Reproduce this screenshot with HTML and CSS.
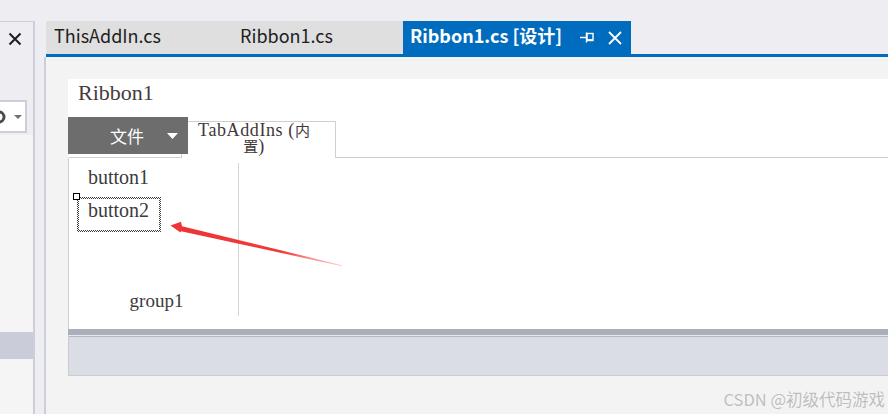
FILE: index.html
```html
<!DOCTYPE html>
<html lang="zh-CN">
<head>
<meta charset="utf-8">
<title>Ribbon1.cs [设计]</title>
<link rel="stylesheet" href="styles.css">
</head>
<body>
<div class="app">
  <aside class="side">
    <div class="side-head">
      <svg class="side-x" width="14" height="14" viewBox="0 0 14 14"><path d="M1.5 1.5 L12.5 12.5 M12.5 1.5 L1.5 12.5" stroke="#1e1e1e" stroke-width="2"/></svg>
    </div>
    <div class="side-search">
      <svg class="search-ring" width="10" height="16" viewBox="0 0 10 16"><circle cx="1" cy="8" r="5" fill="none" stroke="#4a4a4a" stroke-width="3"/></svg>
      <svg class="search-caret" width="8" height="4" viewBox="0 0 8 4"><path d="M0 0 H8 L4 4 Z" fill="#717171"/></svg>
    </div>
    <div class="side-list">
      <div class="side-sel"></div>
    </div>
  </aside>
  <main class="doc">
    <div class="tabs">
      <div class="tab tab-1">ThisAddIn.cs</div>
      <div class="tab tab-2">Ribbon1.cs</div>
      <div class="tab tab-active">
        <span class="tab-title">Ribbon1.cs [设计]</span>
        <svg class="pin" width="14" height="11" viewBox="0 0 14 11"><path d="M0 5.5 H6" stroke="#fff" stroke-width="1.4"/><path d="M6.5 0.5 V10.5" stroke="#fff" stroke-width="1.4"/><rect x="7" y="1.5" width="6" height="7" fill="none" stroke="#fff" stroke-width="1.4"/><path d="M7 7.8 H13" stroke="#fff" stroke-width="1.4"/></svg>
        <svg class="tab-x" width="14" height="14" viewBox="0 0 14 14"><path d="M1 1 L13 13 M13 1 L1 13" stroke="#fff" stroke-width="1.8"/></svg>
      </div>
    </div>
    <div class="tabline"></div>
    <div class="doc-body">
      <div class="designer">
        <div class="rb-title">Ribbon1</div>
        <div class="rb-tabs">
          <div class="file-btn">
            <span class="file-label">文件</span>
            <svg class="file-caret" width="11" height="6" viewBox="0 0 11 6"><path d="M0 0 H11 L5.5 6 Z" fill="#fff"/></svg>
          </div>
          <div class="rb-tab">TabAddIns (<span class="cjk">内置</span>)</div>
          <div class="rb-tabfill"></div>
        </div>
        <div class="rb-body">
          <div class="group">
            <div class="rb-btn btn-1">button1</div>
            <div class="rb-btn-sel">
              <span class="handle"></span>
              <div class="rb-btn-inner">button2</div>
            </div>
            <div class="group-label">group1</div>
          </div>
        </div>
        <div class="rb-bar"></div>
        <div class="rb-status"></div>
      </div>
    </div>
  </main>
</div>
<svg class="arrow" width="888" height="414" viewBox="0 0 888 414">
  <defs>
    <linearGradient id="ag" gradientUnits="userSpaceOnUse" x1="170" y1="226" x2="342" y2="266">
      <stop offset="0" stop-color="#ee3434"/>
      <stop offset="0.65" stop-color="#f03a3a"/>
      <stop offset="1" stop-color="#f77" stop-opacity="0.35"/>
    </linearGradient>
  </defs>
  <polygon points="170.5,225.5 181,221.8 182,226.2 342,265.2 342,266.2 181,231.2 180.5,232.6" fill="url(#ag)"/>
</svg>
<div class="watermark">CSDN @初级代码游戏</div>
</body>
</html>
```
FILE: styles.css
```css
html, body {
  margin: 0;
  padding: 0;
}
body {
  width: 888px;
  height: 414px;
  overflow: hidden;
  background: #eeeef2;
  position: relative;
  font-family: "Noto Sans CJK SC", "Noto Sans", sans-serif;
}
.app {
  display: flex;
  height: 414px;
  padding-top: 21px;
  box-sizing: border-box;
}

/* left tool panel */
.side {
  width: 33px;
  flex: none;
  border-top: 1px solid #cccedb;
  border-right: 2px solid #cccedb;
  display: flex;
  flex-direction: column;
  overflow: hidden;
}
.side-head {
  height: 78px;
}
.side-x {
  display: block;
  margin: 10px 0 0 8px;
}
.side-search {
  height: 29px;
  width: 27px;
  margin-left: -2px;
  border: 2px solid #cccedb;
  border-left: none;
  background: #fff;
  display: flex;
  align-items: center;
}
.search-ring {
  display: block;
}
.search-caret {
  display: block;
  margin-left: 6px;
}
.side-list {
  flex: 1;
  margin-top: 2px;
  background: #f5f5f5;
  padding-top: 197px;
}
.side-sel {
  height: 27px;
  background: #cacdd9;
}

/* document well */
.doc {
  flex: 1;
  margin-left: 9px;
  display: flex;
  flex-direction: column;
  min-width: 0;
}
.tabs {
  display: flex;
  height: 33px;
  margin-left: 2px;
}
.tab {
  height: 33px;
  box-sizing: border-box;
  padding: 0 0 4px 8px;
  background: #dfdfdf;
  color: #1e1e1e;
  font-size: 18px;
  line-height: 29px;
  white-space: nowrap;
}
.tab-1 { width: 186px; }
.tab-2 { width: 171px; }
.tab-active {
  width: 228px;
  background: #006cbe;
  color: #fff;
  font-weight: bold;
  padding-left: 7px;
  display: flex;
  align-items: center;
}
.tab-title {
  width: 163px;
  flex: none;
}
.pin {
  display: block;
  margin-left: 7px;
  margin-top: 4px;
}
.tab-x {
  display: block;
  margin-left: 14px;
  margin-top: 4px;
}
.tabline {
  height: 3px;
  margin-left: 2px;
  background: #006cbe;
}
.doc-body {
  flex: 1;
  border-left: 2px solid #cccedb;
  background: #f3f3f3;
  padding: 22px 0 0 22px;
}

/* ribbon designer */
.designer {
  background: #fff;
  font-family: "Liberation Serif", "Noto Sans CJK SC", serif;
  color: #3a3a3a;
}
.rb-title {
  height: 38px;
  box-sizing: border-box;
  padding: 1px 0 0 10px;
  font-size: 22px;
  line-height: 26px;
  color: #463c3c;
}
.rb-tabs {
  display: flex;
  align-items: flex-end;
  height: 41px;
}
.file-btn {
  position: relative;
  z-index: 1;
  align-self: flex-start;
  width: 120px;
  height: 37px;
  background: #6d6d6d;
  display: flex;
  align-items: center;
  box-sizing: border-box;
  padding-left: 42px;
  margin-bottom: 4px;
}
.file-label {
  font-family: "Noto Sans CJK SC", sans-serif;
  font-size: 17px;
  color: #fff;
  line-height: 20px;
  width: 57px;
}
.file-caret {
  display: block;
}
.rb-tab {
  margin-left: -7px;
  width: 155px;
  height: 37px;
  box-sizing: border-box;
  border: 1px solid #cfcfcf;
  border-bottom: none;
  padding: 0 23px 0 14px;
  font-size: 18px;
  letter-spacing: 0.6px;
  line-height: 16px;
  text-align: center;
  color: #403838;
  background: #fff;
}
.cjk {
  font-family: "Noto Sans CJK SC", sans-serif;
  font-size: 15px;
  letter-spacing: 0;
}
.rb-tabfill {
  flex: 1;
  border-bottom: 1px solid #cfcfcf;
}
.rb-body {
  position: relative;
  height: 171px;
  border-left: 1px solid #cfcfcf;
  display: flex;
}
.rb-body::before {
  content: "";
  position: absolute;
  left: 0;
  top: -1px;
  width: 112px;
  border-top: 1px solid #cfcfcf;
}
.group {
  width: 170px;
  margin-top: 5px;
  height: 153px;
  border-right: 1px solid #d4d4d4;
  display: flex;
  flex-direction: column;
  align-items: flex-start;
  padding: 4px 0 5px 8px;
  box-sizing: border-box;
  font-size: 20px;
  line-height: 20px;
  color: #3c3a40;
}
.rb-btn {
  padding-left: 11px;
}
.rb-btn-sel {
  position: relative;
  margin-top: 10px;
  width: 84px;
  height: 35px;
  box-sizing: border-box;
  padding: 2px;
  background: repeating-conic-gradient(#3a3a3a 0 25%, #fff 0 50%) 0 0 / 2px 2px;
}
.rb-btn-inner {
  background: #fff;
  height: 100%;
  box-sizing: border-box;
  padding: 1px 0 0 9px;
}
.handle {
  position: absolute;
  left: -4px;
  top: -4px;
  width: 5px;
  height: 5px;
  border: 1px solid #000;
  background: #fff;
}
.group-label {
  margin-top: auto;
  align-self: center;
  margin-right: 2px;
  font-size: 19px;
}
.rb-bar {
  height: 6px;
  background: #abafba;
}
.rb-status {
  height: 39px;
  border-top: 1px solid #e6e8ec;
  box-shadow: inset 0 1px 0 #b3b7c1;
  background: #dadde4;
  border-left: 1px solid #c8cbd2;
  border-bottom: 1px solid #cbcbcb;
}

/* overlays */
.arrow {
  position: absolute;
  left: 0;
  top: 0;
  pointer-events: none;
}
.watermark {
  position: absolute;
  right: 3px;
  top: 388px;
  font-family: "Noto Sans CJK SC", sans-serif;
  font-size: 16.5px;
  line-height: 22px;
  color: #bdbdbd;
  text-shadow: 0 0 1px #fff;
}
```
